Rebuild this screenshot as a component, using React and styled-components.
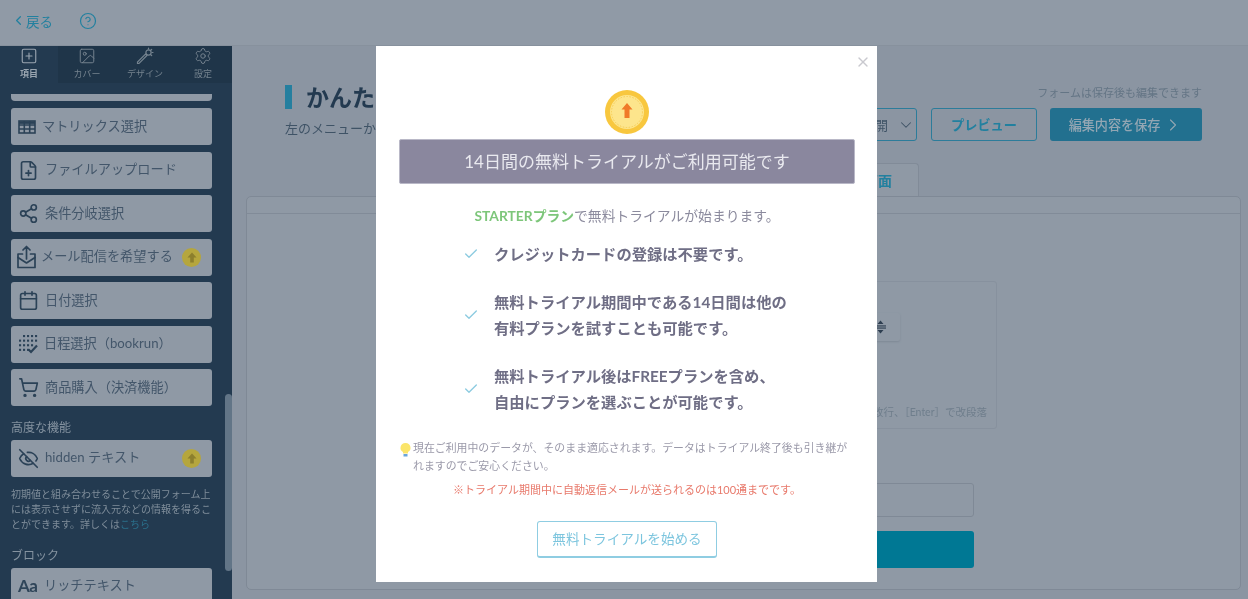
import React from 'react';
import styled, { createGlobalStyle } from 'styled-components';
import {
  ChevronLeft, ChevronDown, ChevronRight, CircleHelp, SquarePlus, Image, Settings,
  FilePlus, Share2, Calendar, ShoppingCart, EyeOff, Check, X,
} from 'lucide-react';

const GlobalStyle = createGlobalStyle`
  html, body { margin: 0; padding: 0; height: 100%; overflow: hidden; background: #8c96a3; }
  body { font-family: Lato, "Noto Sans CJK JP", sans-serif; }
  * { box-sizing: border-box; }
`;

const Page = styled.div`
  position: relative;
  width: 1248px;
  height: 599px;
  overflow: hidden;
  filter: blur(0.45px);
`;

const TopBar = styled.div`
  height: 46px;
  background: #909aa6;
  display: flex;
  align-items: center;
  padding: 0 0 4px 11px;
  color: #22809f;
  border-bottom: 1px solid #87919d;
`;

const BackLink = styled.span`
  display: flex;
  align-items: center;
  font-size: 13.5px;
  width: 68px;
`;

const Body = styled.div`
  display: flex;
  height: 553px;
`;

const Sidebar = styled.aside`
  position: relative;
  width: 232px;
  flex: none;
  background: #233a50;
  overflow: hidden;
`;

const Tabs = styled.div`
  display: flex;
  height: 37px;
  background: #1f3549;
`;

const TabItem = styled.div`
  width: 58px;
  display: flex;
  flex-direction: column;
  align-items: center;
  font-size: 9px;
  line-height: 12px;
  padding-top: 1px;
  gap: 3px;
  font-weight: ${(p) => (p.$active ? 700 : 400)};
  color: ${(p) => (p.$active ? '#9aa5b0' : '#75838f')};
  background: ${(p) => (p.$active ? '#233a50' : 'transparent')};
`;

const SideList = styled.div`
  display: flex;
  flex-direction: column;
  padding: 11px 20px 0 11px;
`;

const Stub = styled.div`
  height: 7px;
  background: #8f99a5;
  border-radius: 0 0 4px 4px;
  margin-bottom: 7px;
`;

const Item = styled.div`
  height: 37px;
  flex: none;
  margin-bottom: ${(p) => (p.$last ? 0 : 6.5)}px;
  background: #8f99a5;
  border-radius: 3px;
  display: flex;
  align-items: center;
  padding-left: ${(p) => p.$pad || 7}px;
  gap: ${(p) => p.$gap || 6}px;
  color: #2b4257;
  font-size: 13.2px;
  white-space: nowrap;
`;

const ItemLabel = styled.span`
  color: #43566a;
  flex: 1;
  padding-bottom: 3px;
`;

const UpBadge = styled.span`
  width: 19px;
  height: 19px;
  border-radius: 50%;
  flex: none;
  margin-right: 11px;
  background: #b5a63d;
  display: flex;
  align-items: center;
  justify-content: center;
`;

const GroupTitle = styled.div`
  font-size: 12px;
  line-height: 18px;
  color: #8593a0;
  margin: ${(p) => p.$top || 0}px 0 3px;
`;

const HelpText = styled.p`
  margin: 10px 0 0;
  font-size: 10px;
  line-height: 15px;
  color: #7f8d9a;
`;

const HelpLink = styled.span`
  color: #2a6f8b;
`;

const Scrollbar = styled.div`
  position: absolute;
  right: 0;
  top: 348px;
  width: 7px;
  height: 177px;
  border-radius: 4px;
  background: #627587;
`;

const Main = styled.main`
  flex: 1;
  display: flex;
  flex-direction: column;
  padding: 24px 7px 9px 14px;
  background: #8b95a2;
  min-width: 0;
`;

const HeadRow = styled.div`
  display: flex;
  justify-content: space-between;
  height: 93px;
  flex: none;
  padding-left: 39px;
`;

const TitleBlock = styled.div`
  padding-top: 15px;
`;

const Title = styled.h1`
  margin: 0;
  font-size: 23px;
  line-height: 24px;
  font-weight: 700;
  color: #233a50;
  border-left: 7px solid #257f9f;
  padding-left: 14px;
  height: 24px;
`;

const Lead = styled.p`
  margin: 9px 0 0;
  font-size: 13px;
  color: #3f5366;
`;

const Controls = styled.div`
  display: flex;
  flex-direction: column;
  align-items: flex-end;
  padding-right: 39px;
`;

const SaveHint = styled.div`
  font-size: 11px;
  line-height: 16px;
  margin-top: 15px;
  color: #647585;
`;

const ControlRow = styled.div`
  display: flex;
  gap: 13px;
  margin-top: 7px;
`;

const OpenSelect = styled.div`
  width: 120px;
  height: 33px;
  margin-right: 1px;
  display: flex;
  align-items: center;
  justify-content: flex-end;
  gap: 9px;
  padding-right: 1px;
  font-size: 13px;
  color: #3f5366;
  border: 1px solid #2c7c9a;
  border-radius: 3px;
`;

const PreviewButton = styled.div`
  width: 106px;
  height: 33px;
  display: flex;
  align-items: center;
  justify-content: center;
  font-size: 13.2px;
  font-weight: 700;
  color: #22809f;
  border: 1px solid #2c7c9a;
  border-radius: 3px;
`;

const SaveButton = styled.div`
  width: 152px;
  height: 33px;
  display: flex;
  align-items: center;
  justify-content: center;
  gap: 3px;
  font-size: 13.1px;
  font-weight: 500;
  color: #93a6b3;
  background: #22708f;
  border-radius: 3px;
`;

const TabRow = styled.div`
  display: flex;
  justify-content: flex-end;
  height: 33px;
  flex: none;
  padding-right: 322px;
`;

const ScreenTab = styled.div`
  width: 300px;
  display: flex;
  align-items: center;
  justify-content: flex-end;
  padding-right: 26px;
  font-size: 14px;
  font-weight: 700;
  color: #22809f;
  background: #8f99a5;
  border: 1px solid #818b98;
  border-bottom: none;
  border-radius: 4px 4px 0 0;
`;

const Card = styled.div`
  flex: 1;
  background: #8f99a5;
  border: 1px solid #7f8996;
  border-radius: 5px;
  display: flex;
  flex-direction: column;
  align-items: flex-end;
  padding-right: 266px;
`;

const CardHead = styled.div`
  height: 17px;
  flex: none;
  align-self: stretch;
  margin-right: -266px;
  border-bottom: 1px solid #818b98;
`;

const EditorBox = styled.div`
  width: 580px;
  height: 148px;
  margin-top: 67px;
  margin-right: -23px;
  border: 1px solid #87919e;
  border-radius: 3px;
  display: flex;
  flex-direction: column;
  align-items: flex-end;
  padding: 31px 96px 0 0;
`;

const SizeButton = styled.div`
  width: 100px;
  height: 28px;
  display: flex;
  align-items: center;
  justify-content: flex-end;
  padding-right: 14px;
  border-radius: 2px;
  box-shadow: 0 1px 2px #7f8996;
`;

const EditorHint = styled.div`
  font-size: 10.5px;
  line-height: 14px;
  color: #6f7e8c;
  margin: 64px -87px 0 0;
  white-space: nowrap;
`;

const FakeInput = styled.div`
  width: 560px;
  height: 34px;
  margin-top: 54px;
  border: 1px solid #7f8996;
  border-radius: 3px;
  flex: none;
`;

const SubmitBar = styled.div`
  width: 560px;
  height: 37px;
  margin-top: 14px;
  background: #007894;
  border-radius: 3px;
  flex: none;
`;

const Modal = styled.section`
  position: absolute;
  left: 376px;
  top: 46px;
  width: 501px;
  height: 536px;
  background: #fff;
  display: flex;
  flex-direction: column;
  align-items: center;
  padding: 44px 22px 0 23px;
`;

const CloseButton = styled.span`
  position: absolute;
  right: 6px;
  top: 8px;
  color: #c9c9cf;
  display: flex;
`;

const Banner = styled.div`
  width: 456px;
  height: 45px;
  margin-top: 5px;
  flex: none;
  background: #8a879e;
  border: 1px solid #b9b8c7;
  border-radius: 2px;
  color: #e9e9ef;
  font-size: 17px;
  display: flex;
  align-items: center;
  justify-content: center;
  padding-bottom: 3px;
`;

const TrialLine = styled.p`
  margin: 22px 0 0;
  font-size: 13.8px;
  line-height: 20px;
  color: #8b8a9d;
`;

const PlanName = styled.strong`
  color: #7dc67a;
`;

const Points = styled.ul`
  list-style: none;
  margin: 15px 0 0;
  padding: 0 0 0 64px;
  align-self: stretch;
  display: flex;
  flex-direction: column;
  gap: 22px;
`;

const Point = styled.li`
  display: flex;
  align-items: center;
  gap: 15px;
  color: #6f6e85;
  font-size: 15.3px;
  font-weight: 700;
  line-height: 26px;
`;

const CheckMark = styled.span`
  color: #8ccbe0;
  display: flex;
  flex: none;
  width: 16px;
`;

const Note = styled.div`
  align-self: stretch;
  margin-top: 24px;
  display: flex;
  gap: 1px;
  font-size: 10.9px;
  line-height: 18px;
  color: #9a99a9;
`;

const NoteText = styled.p`
  margin: 0;
  flex: 1;
`;

const Warning = styled.p`
  margin: 6px 0 0;
  font-size: 11px;
  line-height: 18px;
  color: #e8796b;
`;

const TrialButton = styled.div`
  width: 180px;
  height: 37px;
  margin-top: 22px;
  flex: none;
  border: 1px solid #8fcde2;
  border-bottom-width: 2px;
  border-radius: 3px;
  color: #7cc5de;
  font-size: 13.6px;
  display: flex;
  align-items: center;
  justify-content: center;
  padding-bottom: 2px;
`;

const AaIcon = styled.span`
  font-size: 17px;
  font-weight: 700;
  color: #2f4559;
  width: 20px;
  letter-spacing: -0.5px;
  padding-bottom: 2px;
`;

const MatrixIcon = () => (
  <svg width="18" height="14" viewBox="0 0 18 14" fill="none" stroke="#2b4257" strokeWidth="1.6" style={{ flex: 'none', margin: '0 1px' }}>
    <rect x="1" y="1" width="16" height="12" />
    <path d="M1 5 H17 M1 9 H17 M6.3 1 V13 M11.7 1 V13" />
    <path d="M1 2.6 H17" strokeWidth="2.6" />
  </svg>
);

const MailUpIcon = () => (
  <svg width="19" height="24" viewBox="0 0 19 24" fill="none" stroke="#2b4257" strokeWidth="1.7" strokeLinecap="round" strokeLinejoin="round" style={{ flex: 'none' }}>
    <path d="M5.5 9 H1 V22.5 H18 V9 H13.5" />
    <path d="M1 12.5 L9.5 18 L18 12.5" />
    <path d="M9.5 14 V1.5 M6 5 L9.5 1.5 L13 5" />
  </svg>
);

const DotCalendarIcon = () => {
  const dots = [];
  for (let r = 0; r < 4; r++) {
    for (let c = 0; c < 5; c++) {
      if (r + c > 5 || (r === 0 && c === 0)) continue;
      dots.push(<rect key={`${r}-${c}`} x={1 + c * 4} y={1 + r * 4.6} width="2.1" height="2.1" fill="#2b4257" />);
    }
  }
  return (
    <svg width="20" height="20" viewBox="0 0 20 20" fill="none" style={{ flex: 'none' }}>
      {dots}
      <path d="M10.5 15.5 L13 18 L19 11.5" stroke="#2b4257" strokeWidth="2.2" />
    </svg>
  );
};

const WandIcon = () => (
  <svg width="18" height="18" viewBox="0 0 18 18" fill="none" stroke="#75838f" strokeWidth="1.2" strokeLinecap="round">
    <path d="M1.5 16.5 L3 16.5 L11 8.5 L9.5 7 L1.5 15 Z" />
    <circle cx="12.5" cy="5.5" r="2.6" />
    <path d="M12.5 1 V2 M17 5.5 H16 M15.7 2.3 L15 3 M15.7 8.7 L15 8" />
  </svg>
);

const SizeIcon = () => (
  <svg width="11" height="14" viewBox="0 0 11 14" fill="#2d3e50">
    <path d="M5.5 0.5 L8.5 4 H2.5 Z M5.5 13.5 L8.5 10 H2.5 Z" />
    <rect x="0" y="5.4" width="11" height="1.1" />
    <rect x="0" y="7.5" width="11" height="1.1" />
  </svg>
);

const Coin = () => (
  <svg width="44" height="44" viewBox="0 0 44 44" style={{ flex: 'none' }}>
    <circle cx="22" cy="22" r="22" fill="#f8c73e" />
    <circle cx="22" cy="22" r="17" fill="#fde58c" />
    <circle cx="22" cy="22" r="15.5" fill="none" stroke="#f6cd55" strokeWidth="1" strokeDasharray="1.5 1.5" />
    <path d="M22 13 L27.5 19.5 H24.5 V28 H19.5 V19.5 H16.5 Z" fill="#f07a28" />
  </svg>
);

const Bulb = () => (
  <svg width="13" height="16" viewBox="0 0 13 16" style={{ flex: 'none', marginTop: '3px' }}>
    <path d="M6.5 1 A4.8 4.8 0 0 1 9 10 V11.5 H4 V10 A4.8 4.8 0 0 1 6.5 1 Z" fill="#fbe56a" />
    <rect x="4.5" y="12" width="4" height="2.5" fill="#6aa5dc" />
  </svg>
);

const UpArrow = () => (
  <svg width="10" height="11" viewBox="0 0 10 11">
    <path d="M5 0.5 L9.5 5.5 H6.8 V10.5 H3.2 V5.5 H0.5 Z" fill="#8c7f2d" />
  </svg>
);

const sideIcon = { size: 21, strokeWidth: 1.9, style: { flex: 'none' } };

const features = [
  { icon: <MatrixIcon />, label: 'マトリックス選択', pad: 6, gap: 5 },
  { icon: <FilePlus {...sideIcon} />, label: 'ファイルアップロード' },
  { icon: <Share2 {...sideIcon} />, label: '条件分岐選択' },
  { icon: <MailUpIcon />, label: 'メール配信を希望する', pad: 6, gap: 5, upgrade: true },
  { icon: <Calendar {...sideIcon} />, label: '日付選択' },
  { icon: <DotCalendarIcon />, label: '日程選択（bookrun）' },
  { icon: <ShoppingCart {...sideIcon} />, label: '商品購入（決済機能）' },
];

const points = [
  ['クレジットカードの登録は不要です。'],
  ['無料トライアル期間中である14日間は他の', '有料プランを試すことも可能です。'],
  ['無料トライアル後はFREEプランを含め、', '自由にプランを選ぶことが可能です。'],
];

export default function App() {
  return (
    <Page>
      <GlobalStyle />
      <TopBar>
        <BackLink><ChevronLeft size={15} />戻る</BackLink>
        <CircleHelp size={18} strokeWidth={1.6} />
      </TopBar>
      <Body>
        <Sidebar>
          <Tabs>
            <TabItem $active><SquarePlus size={18} strokeWidth={1.5} />項目</TabItem>
            <TabItem><Image size={18} strokeWidth={1.3} />カバー</TabItem>
            <TabItem><WandIcon />デザイン</TabItem>
            <TabItem><Settings size={18} strokeWidth={1.3} />設定</TabItem>
          </Tabs>
          <SideList>
            <Stub />
            {features.map((f) => (
              <Item key={f.label} $pad={f.pad} $gap={f.gap}>
                {f.icon}
                <ItemLabel>{f.label}</ItemLabel>
                {f.upgrade && <UpBadge><UpArrow /></UpBadge>}
              </Item>
            ))}
            <GroupTitle $top={6}>高度な機能</GroupTitle>
            <Item $last><EyeOff {...sideIcon} /><ItemLabel>hidden テキスト</ItemLabel><UpBadge><UpArrow /></UpBadge></Item>
            <HelpText>初期値と組み合わせることで公開フォーム上には表示させずに流入元などの情報を得ることができます。詳しくは<HelpLink>こちら</HelpLink></HelpText>
            <GroupTitle $top={15}>ブロック</GroupTitle>
            <Item><AaIcon>Aa</AaIcon><ItemLabel>リッチテキスト</ItemLabel></Item>
          </SideList>
          <Scrollbar />
        </Sidebar>
        <Main>
          <HeadRow>
            <TitleBlock>
              <Title>かんたんフォーム</Title>
              <Lead>左のメニューから項目を追加してください</Lead>
            </TitleBlock>
            <Controls>
              <SaveHint>フォームは保存後も編集できます</SaveHint>
              <ControlRow>
                <OpenSelect>公開<ChevronDown size={18} strokeWidth={1.4} /></OpenSelect>
                <PreviewButton>プレビュー</PreviewButton>
                <SaveButton>編集内容を保存<ChevronRight size={20} strokeWidth={1.3} /></SaveButton>
              </ControlRow>
            </Controls>
          </HeadRow>
          <TabRow><ScreenTab>完了画面</ScreenTab></TabRow>
          <Card>
            <CardHead />
            <EditorBox>
              <SizeButton><SizeIcon /></SizeButton>
              <EditorHint>[Shift + Enter] で改行、［Enter］で改段落</EditorHint>
            </EditorBox>
            <FakeInput />
            <SubmitBar />
          </Card>
        </Main>
      </Body>
      <Modal>
        <CloseButton><X size={16} strokeWidth={2} /></CloseButton>
        <Coin />
        <Banner>14日間の無料トライアルがご利用可能です</Banner>
        <TrialLine><PlanName>STARTERプラン</PlanName>で無料トライアルが始まります。</TrialLine>
        <Points>
          {points.map((lines) => (
            <Point key={lines[0]}>
              <CheckMark><Check size={16} strokeWidth={2} /></CheckMark>
              <span>{lines.map((line) => <React.Fragment key={line}>{line}<br /></React.Fragment>)}</span>
            </Point>
          ))}
        </Points>
        <Note>
          <Bulb />
          <NoteText>現在ご利用中のデータが、そのまま適応されます。データはトライアル終了後も引き継がれますのでご安心ください。</NoteText>
        </Note>
        <Warning>※トライアル期間中に自動返信メールが送られるのは100通までです。</Warning>
        <TrialButton>無料トライアルを始める</TrialButton>
      </Modal>
    </Page>
  );
}
